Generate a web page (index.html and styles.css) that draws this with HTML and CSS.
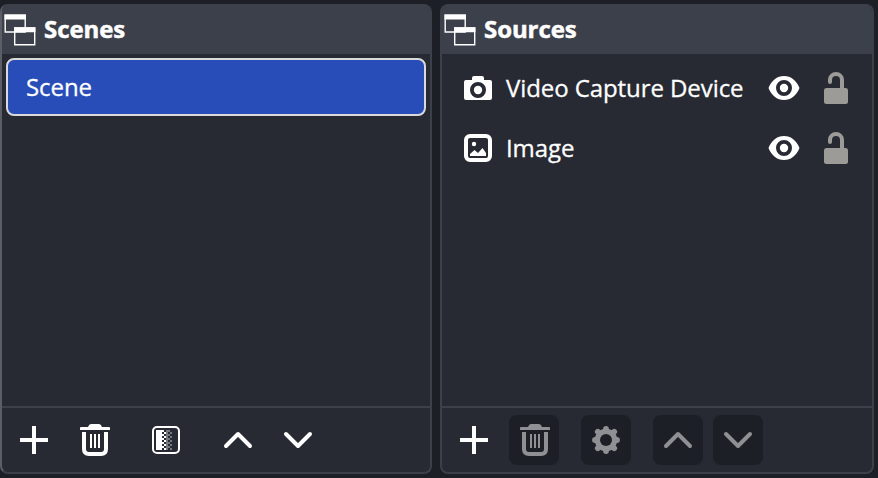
FILE: index.html
```html
<!DOCTYPE html>
<html lang="en">
<head>
<meta charset="utf-8">
<title>Scenes and Sources</title>
<link rel="stylesheet" href="styles.css">
</head>
<body>
<svg class="defs" width="0" height="0" aria-hidden="true">
  <defs>
    <symbol id="windows" viewBox="0 0 32 32">
      <path d="M1.2 1.2h20v16.800h-20zM10.700 13.900h20v16.800h-20z" fill="none" stroke="currentColor" stroke-width="1.400"/>
      <path d="M.5.500h21.400v5H.5zM10 13.200h21.400v5H10z"/>
    </symbol>
    <symbol id="plus" viewBox="0 0 50 50"><path d="M23 11h4v12h12v4H27v12h-4V27H11v-4h12z"/></symbol>
    <symbol id="trash" viewBox="0 0 50 50">
      <path d="M11 15v-2q0-1 1-1h7q1-3 3-3h8q2 0 3 3h7q1 0 1 1v2z"/>
      <path d="M15 17v17q0 5 5 5h12q5 0 5-5V17" fill="none" stroke="currentColor" stroke-width="4"/>
      <path d="M21 19h2v14h-2zM25 19h2v14h-2zM29 19h2v14h-2z"/>
    </symbol>
    <symbol id="up" viewBox="0 0 50 50"><path d="M13 31 25 19 37 31" fill="none" stroke="currentColor" stroke-width="4" stroke-linecap="round" stroke-linejoin="round"/></symbol>
    <symbol id="down" viewBox="0 0 50 50"><path d="M13 19 25 31 37 19" fill="none" stroke="currentColor" stroke-width="4" stroke-linecap="round" stroke-linejoin="round"/></symbol>
    <pattern id="check" width="4" height="4" patternUnits="userSpaceOnUse" x="17" y="15">
      <path d="M0 0h2v2H0zM2 2h2v2H2z" fill="#fefefe"/>
    </pattern>
    <pattern id="check-dim" width="4" height="4" patternUnits="userSpaceOnUse" x="21" y="15">
      <path d="M2 0h2v2H2zM0 2h2v2H0z" fill="#777a80"/>
    </pattern>
    <symbol id="eye" viewBox="0 0 32 24">
      <path fill-rule="evenodd" d="M.5 12C3.500 4.500 9 0 16 0s12.500 4.500 15.500 12C28.500 19.500 23 24 16 24S3.500 19.500.5 12zM16 4a8 8 0 1 0 0 16 8 8 0 0 0 0-16z"/>
      <circle cx="16" cy="12" r="4.200"/>
    </symbol>
    <symbol id="unlock" viewBox="0 0 24 32">
      <rect y="16" width="24" height="16" rx="2.500"/>
      <path d="M6 10V8a6 6 0 0 1 12 0v10" fill="none" stroke="currentColor" stroke-width="4" stroke-linecap="round"/>
    </symbol>
  </defs>
</svg>
<main class="docks">
  <section class="dock scenes">
    <header class="title"><svg class="title-icon"><use href="#windows"/></svg><h2>Scenes</h2></header>
    <ul class="list">
      <li class="scene">Scene</li>
    </ul>
    <footer class="toolbar">
      <button class="tool"><svg><use href="#plus"/></svg></button>
      <button class="tool"><svg><use href="#trash"/></svg></button>
      <button class="tool spaced"><svg viewBox="0 0 50 50">
        <rect x="12" y="12" width="26" height="26" rx="4" fill="none" stroke="currentColor" stroke-width="2"/>
        <path d="M15 15h6v20h-6z"/>
        <path d="M21 15h4v20h-4z" fill="url(#check)"/>
        <path d="M25 15h2v20h-2z" fill="#777a80"/>
        <path d="M27 15h4v20h-4z" fill="url(#check-dim)"/>
      </svg></button>
      <button class="tool spaced"><svg><use href="#up"/></svg></button>
      <button class="tool"><svg><use href="#down"/></svg></button>
    </footer>
  </section>
  <section class="dock sources">
    <header class="title"><svg class="title-icon"><use href="#windows"/></svg><h2>Sources</h2></header>
    <ul class="list">
      <li class="source">
        <svg class="kind" viewBox="0 0 28 28"><path fill-rule="evenodd" d="M2 6h6V4q0-2 2-2h8q2 0 2 2v2h6q2 0 2 2v16q0 2-2 2H2q-2 0-2-2V8q0-2 2-2zM14 8a8 8 0 1 0 0 16 8 8 0 0 0 0-16z"/><circle cx="14" cy="16" r="4.200"/></svg>
        <span class="name">Video Capture Device</span>
        <svg class="eye"><use href="#eye"/></svg>
        <svg class="lock"><use href="#unlock"/></svg>
      </li>
      <li class="source">
        <svg class="kind" viewBox="0 0 28 28"><rect x="2" y="2" width="24" height="24" rx="4" fill="none" stroke="currentColor" stroke-width="4"/><circle cx="10" cy="10" r="2.200"/><path d="M6 22v-2l4.500-4 3.500 3 4.500-5 3.500 5v3z"/></svg>
        <span class="name">Image</span>
        <svg class="eye"><use href="#eye"/></svg>
        <svg class="lock"><use href="#unlock"/></svg>
      </li>
    </ul>
    <footer class="toolbar">
      <button class="tool"><svg><use href="#plus"/></svg></button>
      <button class="tool" disabled><svg><use href="#trash"/></svg></button>
      <button class="tool spaced" disabled><svg viewBox="0 0 50 50">
        <circle cx="25" cy="25" r="8.600" fill="none" stroke="currentColor" stroke-width="5.200"/>
        <path d="M25 14v22M14 25h22M16.800 16.800l16.400 16.400M16.800 33.200l16.400-16.400" stroke="currentColor" stroke-width="5.800" stroke-linecap="round"/>
        <circle cx="25" cy="25" r="6" fill="#1d1f26"/>
      </svg></button>
      <button class="tool spaced" disabled><svg><use href="#up"/></svg></button>
      <button class="tool" disabled><svg><use href="#down"/></svg></button>
    </footer>
  </section>
</main>
</body>
</html>
```
FILE: styles.css
```css
* { box-sizing: border-box; }
body {
  margin: 0;
  background: #1d1f26;
  color: #fefefe;
  font: 24px/32px "Open Sans", "Noto Sans", sans-serif;
  letter-spacing: -0.08px;
  -webkit-text-stroke: 0.3px currentColor;
}
svg { display: block; fill: currentColor; flex: none; }
.defs { position: absolute; }
.docks {
  display: grid;
  grid-template-columns: 432px 434px;
  gap: 8px;
  height: 478px;
  padding: 4px 0;
}
.dock {
  display: flex;
  flex-direction: column;
  border: 2px solid #3c404b;
  border-top: 0;
  border-radius: 8px;
  background: #272a33;
  overflow: hidden;
}
.scenes { border-left-color: #5b5e67; }
.title {
  display: flex;
  align-items: center;
  gap: 8px;
  height: 50px;
  padding-left: 2px;
  background: #3c404b;
}
.title-icon { width: 32px; height: 32px; margin-top: 2px; }
h2 { margin: 0; font-size: 24px; line-height: 50px; font-weight: 700; -webkit-text-stroke-width: 0.5px; }
.list { flex: 1; margin: 0; padding: 4px; list-style: none; }
.scene {
  height: 58px;
  padding: 11px 18px;
  border: 2px solid #d9d9d9;
  border-radius: 8px;
  background: #284cb8;
}
.source {
  display: flex;
  align-items: center;
  height: 60px;
  padding: 0 20px 0 18px;
}
.kind { width: 28px; height: 28px; margin-right: 14px; }
.name { flex: 1; }
.eye { width: 32px; height: 24px; margin-right: 24px; }
.lock { width: 24px; height: 32px; color: #9d9b97; }
.toolbar {
  display: flex;
  gap: 10px;
  height: 66px;
  padding: 7px;
  border-top: 2px solid #3c404b;
}
.tool {
  width: 50px;
  height: 50px;
  padding: 0;
  border: 0;
  border-radius: 8px;
  background: none;
  color: inherit;
}
.tool svg { width: 50px; height: 50px; }
.tool:disabled { background: #1d1f26; color: #8f9093; }
.spaced { margin-left: 12px; }
```
